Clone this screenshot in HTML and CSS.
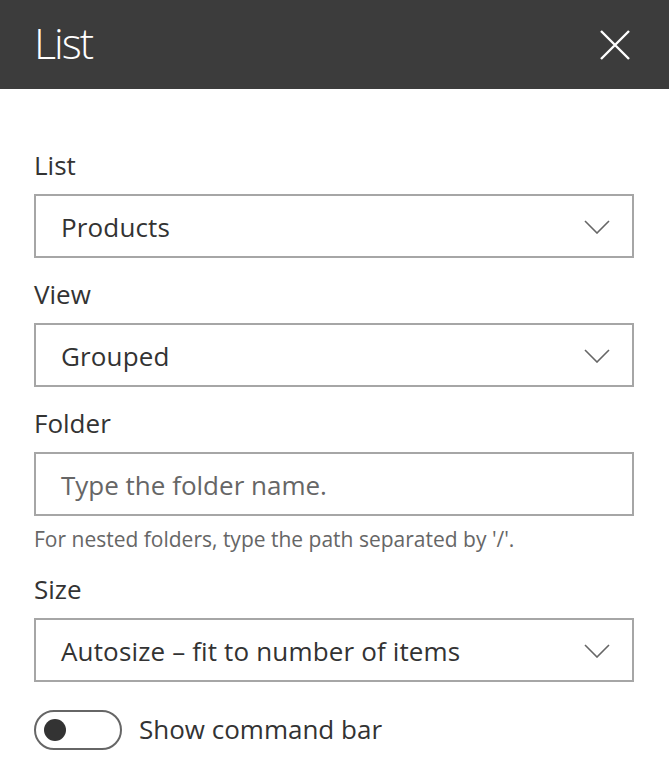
FILE: index.html
```html
<!DOCTYPE html>
<html lang="en">
<head>
<meta charset="utf-8">
<title>List</title>
<link rel="stylesheet" href="styles.css">
</head>
<body>
<div class="pane">
  <header class="pane-header">
    <h1 class="pane-title">List</h1>
    <button class="close-btn" aria-label="Close">
      <svg width="32" height="32" viewBox="0 0 32 32"><path d="M2 2 L30 30 M30 2 L2 30" stroke="#fff" stroke-width="2.4" fill="none"/></svg>
    </button>
  </header>
  <main class="pane-body">
    <div class="field">
      <div class="field-label">List</div>
      <div class="dropdown">
        <span class="dropdown-text">Products</span>
        <svg class="chevron" width="26" height="14" viewBox="0 0 26 14"><path d="M1 1 L13 13 L25 1" stroke="#666" stroke-width="1.6" fill="none"/></svg>
      </div>
    </div>
    <div class="field">
      <div class="field-label">View</div>
      <div class="dropdown">
        <span class="dropdown-text">Grouped</span>
        <svg class="chevron" width="26" height="14" viewBox="0 0 26 14"><path d="M1 1 L13 13 L25 1" stroke="#666" stroke-width="1.6" fill="none"/></svg>
      </div>
    </div>
    <div class="field">
      <div class="field-label">Folder</div>
      <div class="textbox"><span class="placeholder">Type the folder name.</span></div>
      <div class="helper">For nested folders, type the path separated by '/'.</div>
    </div>
    <div class="field">
      <div class="field-label">Size</div>
      <div class="dropdown">
        <span class="dropdown-text">Autosize – fit to number of items</span>
        <svg class="chevron" width="26" height="14" viewBox="0 0 26 14"><path d="M1 1 L13 13 L25 1" stroke="#666" stroke-width="1.6" fill="none"/></svg>
      </div>
    </div>
    <div class="toggle-row">
      <span class="toggle"><span class="knob"></span></span>
      <span class="toggle-label">Show command bar</span>
    </div>
  </main>
</div>
</body>
</html>
```
FILE: styles.css
```css
* { box-sizing: border-box; }
html, body { margin: 0; padding: 0; background: #fff; }
body { font-family: "Open Sans", "Noto Sans", sans-serif; color: #333; }

.pane-header {
  height: 89px;
  background: #3c3c3c;
  display: flex;
  align-items: center;
  justify-content: space-between;
  padding: 0 38px 0 34px;
}
.pane-title {
  margin: 0;
  font-size: 43px;
  font-weight: 300;
  letter-spacing: -2px;
  color: #fff;
  line-height: 1;
  padding-bottom: 5px;
}
.close-btn {
  background: none;
  border: 0;
  padding: 0;
  width: 32px;
  height: 32px;
  display: flex;
}

.pane-body {
  padding: 65px 35px 0 34px;
}
.field { margin-bottom: 25px; }
.field-label {
  font-size: 26px;
  line-height: 22px;
  height: 40px;
  padding-bottom: 18px;
}
.dropdown, .textbox {
  height: 64px;
  border: 2px solid #a6a6a6;
  display: flex;
  align-items: center;
  padding: 2px 22px 0 25px;
  font-size: 26px;
}
.dropdown .dropdown-text { letter-spacing: 0.15px; }
.dropdown-text { flex: 1; }
.chevron { flex: none; margin-top: 0; }
.placeholder { color: #666; }
.helper {
  margin-top: 9px;
  font-size: 21px;
  line-height: 28px;
  color: #666;
}
.toggle-row {
  display: flex;
  align-items: center;
  margin-top: 28px;
}
.toggle {
  width: 88px;
  height: 40px;
  border: 2px solid #666;
  border-radius: 20px;
  display: flex;
  align-items: center;
  padding-left: 8px;
}
.knob {
  width: 22px;
  height: 22px;
  border-radius: 50%;
  background: #333;
}
.toggle-label {
  font-size: 26px;
  margin-left: 17px;
  padding-bottom: 2px;
}
```
